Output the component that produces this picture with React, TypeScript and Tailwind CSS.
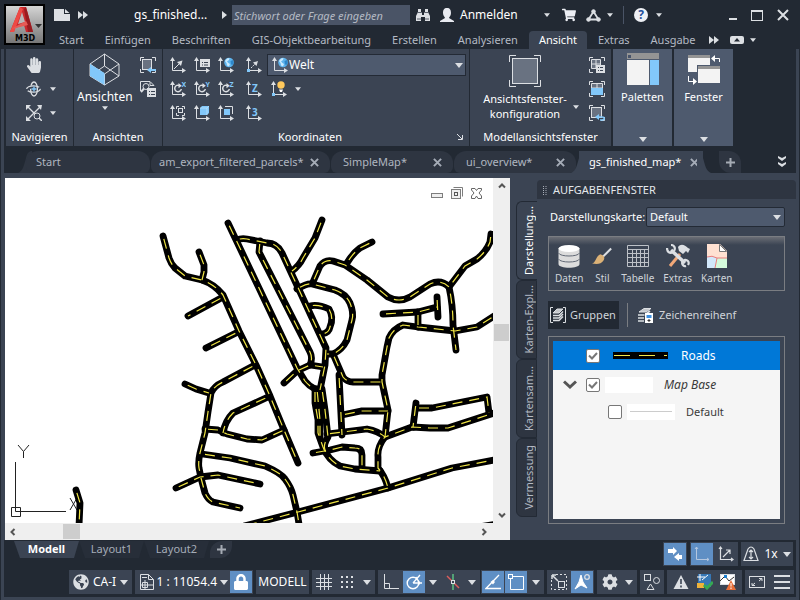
import { useState } from 'react';
import type { ReactNode } from 'react';
import clsx from 'clsx';
import { FaHandPaper, FaShoppingCart, FaCog, FaLock, FaGlobeAmericas } from 'react-icons/fa';

// ═══════════════════════════════════════════════════════════════════════════
// SMALL ICON HELPERS
// ═══════════════════════════════════════════════════════════════════════════

const LIGHT = '#dcdfe3';
const BLUE = '#82c8fa';

type IconProps = { children: ReactNode; className?: string; box?: string };

function Icon({ children, className = 'h-4 w-4', box = '0 0 16 16' }: IconProps) {
  return (
    <svg viewBox={box} className={clsx('block shrink-0', className)} fill="none" stroke={LIGHT} aria-hidden="true">
      {children}
    </svg>
  );
}

function Caret({ small = false }: { small?: boolean }) {
  return (
    <Icon box="0 0 8 5" className={small ? 'h-1 w-1.5' : 'h-[5px] w-2'}>
      <path d="M0 0H8L4 5Z" fill={LIGHT} stroke="none" />
    </Icon>
  );
}

function DoubleArrow() {
  return (
    <Icon box="0 0 10 8" className="h-2 w-2.5">
      <path d="M0 0L5 4L0 8ZM5 0L10 4L5 8Z" fill={LIGHT} stroke="none" />
    </Icon>
  );
}

function Cross() {
  return (
    <Icon box="0 0 10 10" className="h-[9px] w-[9px]">
      <path d="M1 1L9 9M9 1L1 9" strokeWidth="2.2" stroke="#a5acb7" />
    </Icon>
  );
}

function Plus() {
  return (
    <Icon box="0 0 9 9" className="h-[9px] w-[9px]">
      <path d="M4.5 0V9M0 4.5H9" strokeWidth="2" stroke="#a5abb4" />
    </Icon>
  );
}

// Coordinate axes with an extra symbol in the upper right corner
function Axes({ children }: { children?: ReactNode }) {
  return (
    <Icon>
      <path d="M2.5 2V13.5H14" />
      <path d="M2.5 0L5 4H0ZM16 13.5L12 16V11Z" fill={LIGHT} stroke="none" />
      {children}
    </Icon>
  );
}

function Globe() {
  return (
    <g stroke="none">
      <circle cx="11" cy="5.5" r="4.8" fill="#5db4ee" />
      <path d="M7 4L9 1.5L11.5 1L11 3L9 4.500L10.5 6L12 7L11 9.500L9 8.500L8.500 6Z" fill="#c9eaff" />
      <path d="M12.5 4L15 3L15.800 6L14 8.500L12.800 6.500Z" fill="#2d86c9" />
    </g>
  );
}

function Rotate({ axis }: { axis: string }) {
  return (
    <Axes>
      <path d="M9.5 4.5A3.3 3.3 0 1 0 11.300 8" strokeWidth="1.5" />
      <path d="M8.5 2L11.800 4.800L8.500 7.200Z" fill={LIGHT} stroke="none" />
      <text x="11.5" y="5.5" fontSize="7" fontWeight="bold" fill={BLUE} stroke="none">
        {axis}
      </text>
    </Axes>
  );
}

function AxisLetter({ letter }: { letter: string }) {
  return (
    <Axes>
      <text x="6" y="10.5" fontSize="10" fontWeight="bold" fill={BLUE} stroke="none">
        {letter}
      </text>
    </Axes>
  );
}

const CORNERS = 'M0.5 4V0.5H4M12 0.5H15.5V4M15.5 12V15.5H12M4 15.5H0.5V12';

// ═══════════════════════════════════════════════════════════════════════════
// HEADER
// ═══════════════════════════════════════════════════════════════════════════

const RIBBON_TABS = [
  'Start',
  'Einfügen',
  'Beschriften',
  'GIS-Objektbearbeitung',
  'Erstellen',
  'Analysieren',
  'Ansicht',
  'Extras',
  'Ausgabe',
];

function AppButton() {
  return (
    <button
      aria-label="Anwendungsmenü"
      className="mt-1 h-[41px] w-[41px] shrink-0 border-2 border-black bg-gradient-to-b from-[#d5d5d5] via-[#a5a5a5] to-[#777]"
    >
      <Icon box="0 0 37 37" className="h-[37px] w-[37px]">
        <path d="M4 26L14 1H20L27 26H20L18 19L9 22L8 26Z" fill="#c9282d" stroke="none" />
        <path d="M14 1L17 3L8 26H4Z" fill="#ee4a45" stroke="none" />
        <path d="M16 6L19 16L12 18Z" fill="#b9b9b9" stroke="none" />
        <path d="M18 3L20 1L27 26H22Z" fill="#981b20" stroke="none" />
        <path d="M5 23L20 15L22 19L10 22Z" fill="#e65b56" stroke="none" />
        <path d="M29 18H36L32.5 22Z" fill="#333" stroke="none" />
        <text x="9" y="35" fontSize="8" fontWeight="bold" fill="#000" stroke="none" fontFamily="DejaVu Sans, sans-serif">
          M3D
        </text>
      </Icon>
    </button>
  );
}

function TitleBar() {
  return (
    <div className="flex h-7 items-center pt-0.5 text-[12px]">
      <button aria-label="Neu" className="ml-[9px]">
        <Icon box="0 0 16 12" className="h-3 w-4">
          <path d="M0 0H10V5H16V12H0Z" fill={LIGHT} stroke="none" />
          <path d="M11 0L15.5 4H11Z" fill={LIGHT} stroke="none" />
        </Icon>
      </button>
      <button aria-label="Mehr" className="ml-2">
        <DoubleArrow />
      </button>
      <span className="ml-[46px] w-20 whitespace-nowrap text-white">gs_finished...</span>
      <Icon box="0 0 5 8" className="ml-2 h-2 w-[5px]">
        <path d="M0 0L5 4L0 8Z" fill={LIGHT} stroke="none" />
      </Icon>
      <input
        type="text"
        aria-label="Suche"
        placeholder="Stichwort oder Frage eingeben"
        className="ml-[5px] h-5 w-[178px] bg-[#4a5466] px-0.5 text-[11px] italic text-white outline-none placeholder:text-[#b4bac4]"
      />
      <button aria-label="Suchen" className="ml-1.5">
        <Icon box="0 0 14 14" className="h-3.5 w-3.5">
          <path d="M2 1H5V4L6 5V7H8V5L9 4V1H12V4L14 8V13H9V9H5V13H0V8L2 4Z" fill={LIGHT} stroke="none" />
          <path d="M1.500 4.500H5.500M8.500 4.500H12.500M1 11H5M9 11H13" stroke="#5a606b" />
        </Icon>
      </button>
      <button className="ml-2.5 flex items-center gap-1.5 text-white">
        <Icon box="0 0 14 15" className="h-[15px] w-3.5">
          <path d="M7 0C10 0 11 2 11 5C11 8 9 9 9 10L14 13V14H0V13L5 10C5 9 3 8 3 5C3 2 4 0 7 0Z" fill="#e8eaf0" stroke="none" />
        </Icon>
        <span className="w-[78px] text-left">Anmelden</span>
        <Caret small />
      </button>
      <button aria-label="App Store" className="ml-3">
        <FaShoppingCart className="h-3.5 w-3.5 text-[#eceef4]" />
      </button>
      <button aria-label="Autodesk" className="ml-2.5 flex items-center gap-1.5">
        <Icon box="0 0 15 13" className="h-[13px] w-[15px]">
          <path d="M7.5 2.5L2.500 10.500H12.500Z" strokeWidth="1.8" />
          <circle cx="7.5" cy="2.5" r="1.8" fill={LIGHT} />
          <circle cx="2.5" cy="10.5" r="1.8" fill={LIGHT} />
          <circle cx="12.5" cy="10.5" r="1.8" fill={LIGHT} />
        </Icon>
        <Caret small />
      </button>
      <span className="ml-2.5 h-[18px] w-px bg-[#4a5466]" />
      <button aria-label="Hilfe" className="ml-2.5 flex items-center gap-2">
        <span className="flex h-3.5 w-3.5 items-center justify-center rounded-full bg-[#eef0f5] leading-[14px] font-bold text-[#234f9c]">
          ?
        </span>
        <Caret small />
      </button>
      <div className="mr-2.5 ml-auto flex items-center gap-[14px]">
        <button aria-label="Minimieren" className="pt-2">
          <span className="block h-0.5 w-2 bg-[#dcdfe3]" />
        </button>
        <button aria-label="Maximieren" className="h-[11px] w-3 border border-t-2 border-[#dcdfe3]" />
        <button aria-label="Schließen">
          <Icon box="0 0 12 12" className="h-3 w-3">
            <path d="M1 1L11 11M11 1L1 11" strokeWidth="2" />
          </Icon>
        </button>
      </div>
    </div>
  );
}

function RibbonTabs() {
  const [active, setActive] = useState('Ansicht');
  return (
    <nav className="flex h-[21px] items-end gap-px pl-1 text-[#b4bac4]">
      {RIBBON_TABS.map((tab) => (
        <button
          key={tab}
          onClick={() => setActive(tab)}
          className={clsx(
            'h-[18px] rounded-t-sm px-2.5 whitespace-nowrap',
            tab === active && 'bg-[#3b4453] text-white'
          )}
        >
          {tab}
        </button>
      ))}
      <button aria-label="Weitere Register" className="flex h-[18px] items-center px-0.5">
        <DoubleArrow />
      </button>
      <button aria-label="Multifunktionsleiste" className="ml-2 flex h-[18px] items-center gap-1.5">
        <Icon box="0 0 14 8" className="h-2 w-3.5">
          <rect width="14" height="8" rx="2" fill={LIGHT} stroke="none" />
          <path d="M4 5.5L7 2L10 5.500Z" fill="#222933" stroke="none" />
        </Icon>
        <Caret small />
      </button>
    </nav>
  );
}

// ═══════════════════════════════════════════════════════════════════════════
// RIBBON
// ═══════════════════════════════════════════════════════════════════════════

type PanelProps = { label: string; className?: string; children: ReactNode; launcher?: boolean };

function Panel({ label, className, children, launcher = false }: PanelProps) {
  return (
    <section className={clsx('flex flex-col bg-[#3b4453]', className)}>
      <div className="flex-1">{children}</div>
      <div className="flex h-[19px] items-center justify-center whitespace-nowrap">
        <span className={launcher ? 'flex-1 text-center' : ''}>{label}</span>
        {launcher && (
          <Icon box="0 0 6 6" className="mr-1.5 h-1.5 w-1.5">
            <path d="M0 0L5 5M5.5 1V5.500H1" />
          </Icon>
        )}
      </div>
    </section>
  );
}

function ToolButton({ label, children, menu = false }: { label: string; children: ReactNode; menu?: boolean }) {
  return (
    <button aria-label={label} className="flex items-center gap-2">
      {children}
      {menu && <Caret small />}
    </button>
  );
}

function Ribbon() {
  return (
    <div className="flex h-[97px] gap-px pl-0.5 text-white">
      <Panel label="Navigieren" className="w-[67px]">
        <div className="flex flex-col gap-2 pt-2 pl-5">
          <ToolButton label="Pan">
            <FaHandPaper className="h-4 w-4 text-[#dcdfe3]" />
          </ToolButton>
          <ToolButton label="Orbit" menu>
            <Icon>
              <ellipse cx="7.5" cy="8" rx="6.8" ry="3.2" strokeDasharray="14 2" strokeWidth="1.3" />
              <ellipse cx="8" cy="8" rx="3.4" ry="7" strokeDasharray="17 3" strokeWidth="1.3" />
              <path d="M8 5.5V10.500M5.500 8H10.500" stroke={BLUE} strokeWidth="1.3" />
            </Icon>
          </ToolButton>
          <ToolButton label="Zoom Grenzen" menu>
            <Icon>
              <path d="M2 2L9 9M14 2L2 14" strokeWidth="1.4" />
              <path d="M0 0H5L0 5ZM16 0H11L15 5ZM0 16V11L5 16Z" fill={LIGHT} stroke="none" />
              <circle cx="11" cy="11" r="3" fill="#3b4453" />
              <path d="M13 13L16 16" strokeWidth="1.5" />
            </Icon>
          </ToolButton>
        </div>
      </Panel>

      <Panel label="Ansichten" className="w-[88px]">
        <div className="flex justify-between pt-1 pr-1.5 pl-[3px]">
          <button className="flex flex-col items-center">
            <Icon box="0 0 31 33" className="h-[33px] w-[31px]">
              <path d="M15.5 1L30 11V23L15.500 32L1 23V11ZM1 11L15.500 21L30 11M15.500 1V13M15.500 21V32M1 23L15.500 13L30 23" />
              <path d="M1 11L15.5 20V32L1 23Z" fill={BLUE} stroke="none" />
            </Icon>
            <span className="mt-0.5 text-[12px] leading-[18px]">Ansichten</span>
            <Caret small />
          </button>
          <div className="flex flex-col gap-2 pt-1">
            <ToolButton label="Vorherige Ansicht">
              <Icon>
                <path d={CORNERS} />
                <rect x="2.5" y="2.5" width="9" height="10" fill="#697281" />
                <path d="M16 13H10" stroke={BLUE} strokeWidth="2" />
                <path d="M7 13L11 10V16Z" fill={BLUE} stroke="none" />
              </Icon>
            </ToolButton>
            <ToolButton label="Ansichtsmanager">
              <Icon>
                <path d="M0.5 10V0.500H10L14 4.500H10V1" />
                <circle cx="6" cy="5.5" r="3" />
                <path d="M4 7.5L1 11" strokeWidth="2" />
                <path d="M7 7H16V16H7Z" fill={LIGHT} stroke="none" />
                <path d="M9 10.5H10M11 10.500H15M9 13.500H10M11 13.500H15" stroke="#3b4453" />
              </Icon>
            </ToolButton>
          </div>
        </div>
      </Panel>

      <Panel label="Koordinaten" className="min-w-[306px] flex-1" launcher>
        <div className="grid grid-cols-[24px_24px_28px_21px_1fr] items-center pt-[5px] pr-[3px] pl-[7px]">
          <ToolButton label="BKS">
            <Axes>
              <path d="M4 12L10 6" />
              <path d="M12.5 3.5L11 9L7 5Z" fill={LIGHT} stroke="none" />
            </Axes>
          </ToolButton>
          <ToolButton label="Benanntes BKS">
            <Axes>
              <rect x="6" y="2" width="10" height="8" fill={LIGHT} stroke="none" />
              <path d="M8 5.5H9M10 5.500H14M8 8H9M10 8H14" stroke="#3b4453" />
            </Axes>
          </ToolButton>
          <ToolButton label="BKS Welt">
            <Axes>
              <Globe />
            </Axes>
          </ToolButton>
          <ToolButton label="Ursprung">
            <Axes>
              <path d="M5 11L9 7" strokeDasharray="2 1" />
              <path d="M12 4L10.5 9L7 5.500Z" fill={LIGHT} stroke="none" />
              <rect x="1" y="12" width="3" height="3" fill={BLUE} stroke="none" />
            </Axes>
          </ToolButton>
          <label className="relative flex h-[22px] items-center border border-[#232a35] bg-[#4e5a6e]">
            <span className="pointer-events-none absolute left-1">
              <Axes>
                <Globe />
              </Axes>
            </span>
            <select
              aria-label="Koordinatensystem"
              className="h-full w-full appearance-none bg-transparent pl-[21px] text-[12px] text-white outline-none"
            >
              <option>Welt</option>
            </select>
            <span className="pointer-events-none absolute right-0.5">
              <Caret />
            </span>
          </label>

          <ToolButton label="X drehen">
            <Rotate axis="X" />
          </ToolButton>
          <ToolButton label="Y drehen">
            <Rotate axis="Y" />
          </ToolButton>
          <ToolButton label="Z drehen">
            <Rotate axis="Z" />
          </ToolButton>
          <ToolButton label="Z-Achse">
            <AxisLetter letter="Z" />
          </ToolButton>
          <div className="flex h-[26px] items-center pl-1">
            <ToolButton label="BKS-Symbol" menu>
              <Axes>
                <circle cx="10" cy="4" r="3.7" fill="#ffc95c" stroke="none" />
                <path d="M8 8.5H12L11 11H9Z" fill="#fff" stroke="none" />
                <rect x="1" y="12" width="3" height="3" fill={BLUE} stroke="none" />
              </Axes>
            </ToolButton>
          </div>

          <ToolButton label="Ansicht">
            <Axes>
              <path d="M6.5 4V1.500H9M12 1.500H14.500V4M14.500 8V10.500H12M9 10.500H6.500V8" />
              <rect x="8.5" y="3.5" width="4" height="4" />
            </Axes>
          </ToolButton>
          <ToolButton label="Objekt">
            <Axes>
              <path d="M6 3L8 1H15V8L13 10H6Z" fill={BLUE} stroke="none" />
              <path d="M6 3H13L15 1M13 3V10" stroke="#d8f0ff" strokeWidth="0.5" />
            </Axes>
          </ToolButton>
          <ToolButton label="Fläche">
            <Axes>
              <rect x="6" y="4" width="6" height="6" fill={BLUE} stroke="none" />
              <path d="M7 1.5H14.500V9" />
            </Axes>
          </ToolButton>
          <ToolButton label="3 Punkte">
            <AxisLetter letter="3" />
          </ToolButton>
          <span className="h-[22px]" />
        </div>
      </Panel>

      <Panel label="Modellansichtsfenster" className="w-[141px]">
        <div className="flex justify-between pt-1.5 pr-1.5 pl-[3px]">
          <div className="flex">
            <button className="flex w-[104px] flex-col items-center">
              <Icon box="0 0 32 32" className="h-8 w-8">
                <path d="M0.5 7V0.500H7M25 0.500H31.500V7M31.500 25V31.500H25M7 31.500H0.500V25" />
                <rect x="3.5" y="3.5" width="25" height="25" fill="#697281" />
              </Icon>
              <span className="mt-1 leading-[15px]">
                Ansichtsfenster-
                <br />
                konfiguration
              </span>
            </button>
            <span className="-ml-1 mt-[50px]">
              <Caret small />
            </span>
          </div>
          <div className="flex flex-col gap-2 pt-0.5">
            <ToolButton label="Benannt">
              <Icon>
                <path d={CORNERS} />
                <path d="M2.5 2.500H11.500V11.500H2.500ZM7 2.500V11M2.500 7H11" fill="#697281" />
                <rect x="7" y="8" width="9" height="8" fill={LIGHT} stroke="none" />
                <path d="M9 10.5H10M11 10.500H14M9 13.500H10M11 13.500H14" stroke="#3b4453" />
              </Icon>
            </ToolButton>
            <ToolButton label="Verbinden">
              <Icon>
                <path d={CORNERS} />
                <path d="M2.5 2.500H13.500V7H2.500ZM8 3V7" fill="#697281" />
                <rect x="2" y="7" width="12" height="7" fill={BLUE} stroke="none" />
              </Icon>
            </ToolButton>
            <ToolButton label="Wiederherstellen">
              <Icon>
                <path d={CORNERS} />
                <rect x="2.5" y="2.5" width="10" height="10" fill="#697281" />
                <path d="M9 12H13C16 12 16 15 13 15H11" stroke={BLUE} strokeWidth="1.5" />
                <path d="M6 12L10 9V15Z" fill={BLUE} stroke="none" />
              </Icon>
            </ToolButton>
          </div>
        </div>
      </Panel>

      <button className="ml-px flex w-[59px] flex-col items-center bg-[#4e5a6e] pt-1">
        <Icon box="0 0 32 32" className="h-8 w-8">
          <path d="M0 0H32V6H0Z" fill="#949494" stroke="none" />
          <path d="M1 2H4V5H1Z" fill="#47536a" stroke="none" />
          <path d="M0 7H22V32H0Z" fill="#f3f3f3" stroke="none" />
          <path d="M23 7H32V32H23Z" fill={BLUE} stroke="none" />
        </Icon>
        <span className="mt-1">Paletten</span>
        <span className="mt-auto mb-1">
          <Caret />
        </span>
      </button>
      <button className="ml-px flex w-[59px] flex-col items-center bg-[#4e5a6e] pt-1">
        <Icon box="0 0 34 32" className="h-8 w-[34px]">
          <path d="M1 2H23V19H1Z" fill="#f3f3f3" stroke="none" />
          <path d="M1 2H23V5H1Z" fill="#949494" stroke="none" />
          <path d="M10 12H34V31H10Z" fill="#4e5a6e" stroke="none" />
          <path d="M11 13H33V30H11Z" fill="#f3f3f3" stroke="none" />
          <path d="M11 13H33V16H11Z" fill="#949494" stroke="none" />
          <path d="M27 5.5H32.500V9M1.500 23V28.500H6" stroke="#fff" />
          <path d="M24 5.5L28 2V9ZM10 28.500L6 25V32Z" fill="#fff" stroke="none" />
        </Icon>
        <span className="mt-1">Fenster</span>
        <span className="mt-auto mb-1">
          <Caret />
        </span>
      </button>
      <div className="w-[62px]" />
    </div>
  );
}

// ═══════════════════════════════════════════════════════════════════════════
// FILE TABS
// ═══════════════════════════════════════════════════════════════════════════

const FILES = [
  { name: 'Start', width: 'w-[127px]', pad: 'pl-2.5' },
  { name: 'am_export_filtered_parcels*', width: 'w-[180px]', pad: 'pl-2' },
  { name: 'SimpleMap*', width: 'w-[123px]', pad: 'pl-3' },
  { name: 'ui_overview*', width: 'w-[123px]', pad: 'pl-3' },
  { name: 'gs_finished_map*', width: 'w-[128px]', pad: 'pl-3' },
];

function Flare({ color, flip = false }: { color: string; flip?: boolean }) {
  return (
    <svg
      viewBox="0 0 14 22"
      preserveAspectRatio="none"
      className={clsx('-mx-1.5 h-full w-3.5 shrink-0', flip && '-scale-x-100')}
      aria-hidden="true"
    >
      <path d="M0 22C5 20 6 14 8 7C9 2 11 0 14 0V22Z" fill={color} />
    </svg>
  );
}

function FileTabs() {
  const [open, setOpen] = useState('gs_finished_map*');
  return (
    <div className="mt-[5px] flex h-[22px] items-stretch bg-[#222933] pl-5 text-[#aeb5c0]">
      {FILES.map((file, i) => {
        const active = file.name === open;
        return (
          <div key={file.name} className={clsx('flex', file.width)}>
            {(active || i === 0) && <Flare color={active ? '#3b4453' : '#2e3541'} />}
            <div
              className={clsx(
                'flex min-w-0 flex-1 items-center justify-between',
                active
                  ? 'bg-[#3b4453] pr-1 pl-2.5 text-white'
                  : 'mr-px rounded-xl rounded-b-md bg-[#2e3541] pr-[11px]',
                !active && file.pad
              )}
            >
              <button onClick={() => setOpen(file.name)} className="whitespace-nowrap">
                {file.name}
              </button>
              {i > 0 && (
                <button aria-label={`${file.name} schließen`}>
                  <Cross />
                </button>
              )}
            </div>
            {active && <Flare color="#3b4453" flip />}
          </div>
        );
      })}
      <button
        aria-label="Neue Zeichnung"
        className="ml-3.5 flex w-[22px] items-center justify-center rounded-tr-xl rounded-bl-xl bg-[#2e3541]"
      >
        <Plus />
      </button>
      <button aria-label="Weitere Dateien" className="mr-2.5 ml-auto flex items-center">
        <Icon box="0 0 8 12" className="h-3 w-2">
          <path d="M0 0L4 2L8 0V2L4 5L0 2ZM0 6L4 8L8 6V8L4 11L0 8Z" fill={LIGHT} stroke="none" />
        </Icon>
      </button>
    </div>
  );
}

// ═══════════════════════════════════════════════════════════════════════════
// DRAWING AREA
// ═══════════════════════════════════════════════════════════════════════════

const ROADS = [
  'M163 236L169 258Q171 264 175 268L185 276L202 280Q214 284 223 295L239 331L256 365L270 396L284 430L298 463',
  'M199 252L204 265V272L202 280',
  'M223 297L188 316',
  'M238 332L206 348',
  'M255 365L223 382Q214 386 211 393L208 412L205 433L200 453Q198 462 199 468L201 478L205 493Q208 500 213 502L240 508',
  'M185 384L196 389L209 393',
  'M268 397L233 413Q225 421 223 433',
  'M205 429L218 430L227 434L247 439L262 440L284 430',
  'M202 454L230 458L265 466Q281 473 285 479Q291 487 293 495L297 512L299 524',
  'M176 488L200 477L218 475L260 484',
  'M228 223L297 368L305 381Q309 386 315 389',
  'M237 240Q241 238 247 239L267 243Q277 243 282 253L326 348L325 365L320 390',
  'M260 241L259 252L310 352Q313 358 310 365',
  'M284 383L297 371L310 365L323 367',
  'M322 220L315 238L303 258Q299 266 292 271',
  'M297 289Q307 283 312 284L335 290Q346 294 350 303Q354 313 352 320L347 340Q342 350 333 354H327',
  'M313 282L320 266Q325 259 333 261L345 265L367 280L388 297Q399 303 410 297L430 284Q441 279 449 287Q453 305 453 325L456 350',
  'M372 242L360 248Q353 253 347 263',
  'M491 234L490 242Q486 252 477 259L465 266L449 287',
  'M383 314L418 312L437 307',
  'M437 297L438 317',
  'M418 312V327',
  'M494 316L477 327L455 331L418 327L403 325Q393 329 389 338L387 347L382 375V382L388 410L385 437Q377 447 378 457V468Q385 476 388 488',
  'M333 354L343 377Q347 382 353 382H382',
  'M339 375L342 435',
  'M342 415L361 411H388',
  'M327 434L367 429Q378 431 385 437L412 427L430 428H448L494 413',
  'M416 403L413 427',
  'M416 408H432L487 397L489 413',
  'M315 389V403L318 420V433L323 447Q328 460 340 466L355 469L380 471',
  'M317 389L320 420V437',
  'M322 389L325 410L328 437Q322 446 326 452',
  'M313 453L330 450L342 447L355 448Q362 448 362 455V467',
  'M310 306Q318 304 329 309Q334 317 330 327Q329 333 322 334',
  'M244 526L298 512L388 488L452 468L494 460',
  'M76 490L80 503L79 526',
];

function MapCanvas() {
  return (
    <svg
      viewBox="5 178 488 345"
      preserveAspectRatio="xMinYMin slice"
      className="block h-0 min-h-[345px] w-full flex-1 bg-white"
      fill="none"
      role="img"
      aria-label="Straßenkarte"
    >
      {/* UCS marker */}
      <g stroke="#222">
        <path d="M15.5 462V511.500H66M11.500 507.500H20.500V516.500H11.500Z" />
        <path d="M18 445L23.5 451.500L29 445M23.500 451.500V458M70 510L77 498M70 498L77 510" />
      </g>
      <g stroke="#000" strokeWidth="6.800" strokeLinecap="round" strokeLinejoin="round">
        {ROADS.map((d) => (
          <path key={d} d={d} />
        ))}
      </g>
      <g stroke="#f0e545" strokeWidth="1.200" strokeDasharray="10 7" strokeDashoffset="-3">
        {ROADS.map((d) => (
          <path key={d} d={d} />
        ))}
      </g>
      <path d="M476 524L494 521V524Z" fill="#000" />
      {/* Viewport controls */}
      <g stroke="#7d7d7d">
        <rect x="431.5" y="193.5" width="11" height="4" fill="#eee" />
        <path d="M453.5 187.500H462.500V196.500" />
        <rect x="451.5" y="189.5" width="9" height="9" fill="#eee" />
        <rect x="454.5" y="192.5" width="3" height="3" stroke="#555" />
        <path
          d="M471.5 188.500H475L476.500 190.500L478 188.500H481.500V190L479 193L481.500 196V198.500H478L476.500 196L475 198.500H471.500V196L474 193L471.500 190Z"
          stroke="#666"
        />
      </g>
    </svg>
  );
}

function Chevron({ dir }: { dir: 'up' | 'down' | 'left' | 'right' }) {
  const turn = { up: 'rotate-180', down: '', left: 'rotate-90', right: '-rotate-90' }[dir];
  return (
    <Icon box="0 0 8 8" className={clsx('h-2 w-2', turn)}>
      <path d="M1 2.5L4 5.500L7 2.500" stroke="#555" strokeWidth="2" />
    </Icon>
  );
}

function Drawing() {
  return (
    <div className="flex min-w-[505px] flex-1 flex-col">
      <div className="flex flex-1">
        <div className="flex min-w-0 flex-1 flex-col">
          <MapCanvas />
        </div>
        <div className="flex w-[17px] flex-col items-center justify-between bg-[#efefef] py-1">
          <button aria-label="Nach oben">
            <Chevron dir="up" />
          </button>
          <span className="mb-9 h-[17px] w-[15px] bg-[#cdcdcd]" />
          <button aria-label="Nach unten">
            <Chevron dir="down" />
          </button>
        </div>
      </div>
      <div className="flex h-[17px] items-center bg-[#efefef] pr-[22px] pl-1">
        <button aria-label="Nach links">
          <Chevron dir="left" />
        </button>
        <span className="ml-[46px] h-[15px] w-[17px] bg-[#cdcdcd]" />
        <button aria-label="Nach rechts" className="ml-auto">
          <Chevron dir="right" />
        </button>
      </div>
    </div>
  );
}

// ═══════════════════════════════════════════════════════════════════════════
// TASK PANE
// ═══════════════════════════════════════════════════════════════════════════

const SIDE_TABS = ['Darstellung...', 'Karten-Expl...', 'Kartensam...', 'Vermessung'];

function PaneTool({ label, children }: { label: string; children: ReactNode }) {
  return (
    <button className="flex flex-col items-center gap-0.5 text-[10px] leading-4 text-[#d0d4da]">
      {children}
      <span>{label}</span>
    </button>
  );
}

function LayerCheck({ label, defaultChecked = false }: { label: string; defaultChecked?: boolean }) {
  const [checked, setChecked] = useState(defaultChecked);
  return (
    <span className="relative block h-3.5 w-3.5 shrink-0">
      <input
        type="checkbox"
        aria-label={label}
        checked={checked}
        onChange={() => setChecked(!checked)}
        className="block h-3.5 w-3.5 appearance-none rounded-xs border border-[#777] bg-white"
      />
      {checked && (
        <Icon box="0 0 14 14" className="pointer-events-none absolute top-0 left-0 h-3.5 w-3.5">
          <path d="M3 6.5L6 9.500L11 4" stroke="#777" strokeWidth="2" />
        </Icon>
      )}
    </span>
  );
}

function TaskPane() {
  const [side, setSide] = useState(SIDE_TABS[0]);
  return (
    <aside className="flex w-[286px] shrink-0 pl-1.5">
      <div className="flex w-[21px] flex-col pt-[23px]">
        {SIDE_TABS.map((tab) => (
          <button
            key={tab}
            onClick={() => setSide(tab)}
            className={clsx(
              'flex h-[79px] items-center justify-center rounded-l-md border border-[#232a35] pl-1',
              tab === side ? 'border-r-0 text-white' : 'bg-[#2e3541] text-[#b4bac4]'
            )}
          >
            <span className="rotate-180 leading-4 whitespace-nowrap [writing-mode:vertical-rl]">{tab}</span>
          </button>
        ))}
      </div>
      <div className="flex flex-1 flex-col pt-0.5">
        <h2 className="flex h-[19px] items-center gap-1.5 rounded-t-sm bg-[#2e3541] pl-1.5 text-[#e4e7eb]">
          <Icon box="0 0 4 10" className="mt-0.5 h-2.5 w-1">
            <path d="M0.5 0V10M3 0V10" strokeDasharray="1 1" stroke="#aab0ba" />
          </Icon>
          AUFGABENFENSTER
        </h2>
        <div className="flex flex-1 flex-col pr-[11px] pl-[11px]">
          <div className="mt-2 flex items-center justify-between pl-0.5 text-white">
            <label htmlFor="display-map">Darstellungskarte:</label>
            <span className="relative flex h-5 w-[139px] items-center">
              <select
                id="display-map"
                className="h-full w-full appearance-none rounded-xs border border-[#232a35] bg-[#4e5a6e] pl-[3px] outline-none"
              >
                <option>Default</option>
              </select>
              <span className="pointer-events-none absolute right-1">
                <Caret />
              </span>
            </span>
          </div>

          <div className="mt-[9px] flex h-[55px] items-end gap-[9px] border border-[#7a7d82] bg-gradient-to-b from-[#6b6e75] via-[#3b4453] via-15% to-[#3b4453] pb-1 pl-1.5">
            <PaneTool label="Daten">
              <Icon box="0 0 24 24" className="h-6 w-6">
                <path d="M1.5 4V20C1.500 25 22.500 25 22.500 20V4Z" fill="#dcdcdc" stroke="none" />
                <ellipse cx="12" cy="4.5" rx="10.5" ry="3.5" fill="#fff" stroke="none" />
                <path d="M1.5 9C3 13 21 13 22.500 9M1.500 15C3 19 21 19 22.500 15" stroke="#626976" />
              </Icon>
            </PaneTool>
            <PaneTool label="Stil">
              <Icon box="0 0 24 24" className="h-6 w-5">
                <path d="M23 3L13 13" strokeWidth="2.5" />
                <path d="M10 10C14 11 16 14 14 17C11 22 6 22 0 21C5 20 4 13 10 10Z" fill="#dbb176" stroke="none" />
              </Icon>
            </PaneTool>
            <PaneTool label="Tabelle">
              <Icon box="0 0 24 24" className="h-6 w-6">
                <path
                  d="M1.5 1.500H22.500V22.500H1.500ZM1.500 5.500H22.500M1.500 9.500H22.500M1.500 13.500H22.500M1.500 18.500H22.500M6.500 5.500V22M10.500 5.500V22M14.500 5.500V22M18.500 5.500V22"
                  stroke="#bdc1c7"
                />
              </Icon>
            </PaneTool>
            <PaneTool label="Extras">
              <Icon box="0 0 24 24" className="h-6 w-6">
                <path d="M14 10L4 22" stroke="#f2a878" strokeWidth="3" />
                <path d="M12 3C15 -1 19 1 22 4L24 5L22 9L20 7L17 10L13 7Z" fill={LIGHT} stroke="none" />
                <path d="M5 6L19 19" strokeWidth="3.5" />
                <path d="M1 4C1 8 4 10 7 8M5 1C8 1 10 4 8 7M17 17C15 19 17 23 20 22M18 16C21 15 24 18 22 21" strokeWidth="2.2" />
              </Icon>
            </PaneTool>
            <PaneTool label="Karten">
              <Icon box="0 0 24 24" className="h-6 w-6">
                <path d="M2 0H15L22 7V24H2Z" fill="#ffe1d2" stroke="none" />
                <path d="M2 13Q7 11 12 14L10 24H2Z" fill="#d2e8fb" stroke="none" />
                <path d="M12 14H22V24H10Z" fill="#d4fbdc" stroke="none" />
                <path d="M2 13Q7 11 12 14H22M12 14L10 24" stroke="#e87d7d" />
                <path d="M14.5 0.500V7.500H21.500Z" fill="#fff" stroke="#777" />
              </Icon>
            </PaneTool>
          </div>

          <div className="mt-2.5 flex h-7 items-center text-[#d0d4da]">
            <button className="flex h-full w-[71px] items-center gap-1 bg-[#222933] pl-0.5">
              <Icon>
                <path d="M3 0.500H0.500V15.500H3M13 0.500H15.500V15.500H13" />
                <path d="M3 6L7 2H13L9 6Z" fill="#c5c8cc" />
                <path d="M3 8.500H9L13 4.500M3 11H9L13 7M3 13.500H9L13 9.500" strokeWidth="1.400" />
              </Icon>
              Gruppen
            </button>
            <span className="ml-2 h-6 w-px bg-[#7a7d82]" />
            <button className="ml-[9px] flex items-center gap-1.5">
              <Icon>
                <path d="M2 5L7 1.500H14L9 5Z" fill="#c5c8cc" />
                <path d="M1 8H7.500M1 11H7M1 14H7M9 7L13 4" strokeWidth="1.600" />
                <rect x="8" y="6" width="8" height="10" fill="#fff" stroke="none" />
                <rect x="9.500" y="8" width="5" height="3" fill="#3d8fe0" stroke="none" />
                <path d="M12 12V15M10.500 13.500H13.500" stroke="#333" />
              </Icon>
              Zeichenreihenf
            </button>
          </div>

          <div className="mt-[7px] min-h-[188px] flex-1 border border-[#7a7d82] p-1">
            <ul className="h-full bg-[#f5f5f5] text-[12px] text-[#3a3a3a]">
              <li className="flex h-[29px] items-center bg-[#0078d7] pl-[33px] text-white">
                <LayerCheck label="Roads" defaultChecked />
                <Icon box="0 0 55 7" className="ml-[13px] h-[7px] w-[55px]">
                  <rect width="55" height="7" fill="#000" stroke="none" />
                  <path d="M1 3.500H54" stroke="#f5e94c" strokeDasharray="16 9" />
                </Icon>
                <span className="ml-[13px]">Roads</span>
              </li>
              <li className="flex h-[29px] items-center pl-2.5">
                <Icon box="0 0 14 10" className="h-2.5 w-3.5">
                  <path d="M1 1.500L7 7L13 1.500" stroke="#555" strokeWidth="3" />
                </Icon>
                <span className="w-[9px]" />
                <LayerCheck label="Map Base" defaultChecked />
                <span className="ml-[5px] h-4 w-12 bg-white" />
                <span className="ml-[11px] italic">Map Base</span>
              </li>
              <li className="flex h-[25px] items-center pl-[55px]">
                <LayerCheck label="Default" />
                <span className="ml-[5px] flex h-4 w-12 items-center bg-white px-[3px]">
                  <span className="h-px w-full bg-[#ccc]" />
                </span>
                <span className="ml-[11px] text-[11px]">Default</span>
              </li>
            </ul>
          </div>
          <div className="h-4" />
        </div>
      </div>
    </aside>
  );
}

// ═══════════════════════════════════════════════════════════════════════════
// STATUS BAR
// ═══════════════════════════════════════════════════════════════════════════

function Group({ children, className }: { children: ReactNode; className?: string }) {
  return <div className={clsx('flex h-6 shrink-0 items-center bg-[#3b4453]', className)}>{children}</div>;
}

function Toggle({ label, on = false, children }: { label: string; on?: boolean; children: ReactNode }) {
  const [pressed, setPressed] = useState(on);
  return (
    <button
      aria-label={label}
      aria-pressed={pressed}
      onClick={() => setPressed(!pressed)}
      className={clsx('flex h-[22px] w-[22px] shrink-0 items-center justify-center', pressed && 'bg-[#5f8fc4]')}
    >
      {children}
    </button>
  );
}

function MenuButton({ label }: { label: string }) {
  return (
    <button aria-label={label} className="flex h-full w-4 items-center justify-center">
      <Caret />
    </button>
  );
}

function LayoutTabs() {
  const [active, setActive] = useState('Modell');
  return (
    <div className="flex h-[17px] items-stretch pl-2.5 text-[11px]">
      {['Modell', 'Layout1', 'Layout2'].map((tab) => (
        <button
          key={tab}
          onClick={() => setActive(tab)}
          className={clsx(
            'w-[65px] pb-px leading-4 [clip-path:polygon(0_0,100%_0,calc(100%_-_5px)_100%,6px_100%)]',
            tab === active ? 'bg-[#3b4453] font-bold text-white' : 'bg-[#272e39] text-[#a5acb7]'
          )}
        >
          {tab}
        </button>
      ))}
      <button
        aria-label="Neues Layout"
        className="ml-px flex w-[22px] items-center justify-center rounded-tl-xl rounded-br-xl bg-[#2e3541]"
      >
        <Plus />
      </button>
    </div>
  );
}

function StatusBar() {
  return (
    <footer className="bg-[#222933] pt-px pb-[3px] text-[12px] text-white">
      <div className="flex h-[29px] items-start justify-between pr-[3px]">
        <LayoutTabs />
        <div className="flex gap-[3px] pt-px">
          <Group className="px-px">
            <Toggle label="Hardwarebeschleunigung" on>
              <Icon>
                <path d="M1 3H6V1L10 5L6 9V7H1ZM15 9H12V7L7 11L12 15V13H15Z" fill="#fff" stroke="none" />
              </Icon>
            </Toggle>
          </Group>
          <Group className="gap-0.5 px-px">
            <Toggle label="2D-Achsen" on>
              <Icon>
                <path d="M2.500 1V13.500H15M1 3L2.500 1L4 3M13 12L15 13.500L13 15" stroke="#b3c6df" />
              </Icon>
            </Toggle>
            <Toggle label="3D-Achsen">
              <Icon>
                <path d="M2.500 1V13.500H15M1 3L2.500 1L4 3M13 12L15 13.500L13 15M5 11L12 4M8 4H12V8" strokeWidth="1.200" />
              </Icon>
            </Toggle>
          </Group>
          <Group className="w-[52px] justify-around">
            <Icon>
              <path d="M1 14.500H15L11 3Q8 -1 5 3ZM8 4V13M6 6L8 4L10 6M6 11L8 13L10 11" strokeWidth="1.200" />
            </Icon>
            <span>1x</span>
            <Caret />
          </Group>
        </div>
      </div>
      <div className="flex items-center justify-end gap-[3px] pr-0.5">
        <Group className="w-[63px] justify-between px-1">
          <FaGlobeAmericas className="h-4 w-4 text-[#dcdfe3]" />
          <span>CA-I</span>
          <Caret />
        </Group>
        <Group className="w-[118px] justify-between pr-px pl-[5px]">
          <Icon box="0 0 14 16" className="h-4 w-3.5">
            <path d="M0.500 15.500V0.500H8.500L13.500 5.500V15.500ZM8.500 0.500V5.500H13.500M2.500 8.500H7.500V13.500H2.500ZM0 11H14M5 6V16M2 3.500H7" />
          </Icon>
          <span className="whitespace-nowrap">1 : 11054.4</span>
          <Caret />
          <Toggle label="Maßstab sperren" on>
            <FaLock className="h-4 w-3.5 text-white" />
          </Toggle>
        </Group>
        <Group className="w-[53px] justify-center">
          <button>MODELL</button>
        </Group>
        <Group className="w-[63px] justify-between pl-px">
          <Toggle label="Raster">
            <Icon>
              <path d="M4.500 0V16M8.500 0V16M12.500 0V16M0 4.500H16M0 8.500H16M0 12.500H16" />
            </Icon>
          </Toggle>
          <Toggle label="Fang">
            <Icon box="0 0 14 12" className="h-3 w-3.5">
              <path d="M1 1H13M1 6H13M1 11H13" strokeWidth="2" strokeDasharray="2 3" />
            </Icon>
          </Toggle>
          <MenuButton label="Fangoptionen" />
        </Group>
        <Group className="w-[102px] justify-between pl-0.5">
          <Toggle label="Ortho">
            <Icon>
              <path d="M1.500 0V14.500H16M1.500 9.500H6.500V14.500" />
            </Icon>
          </Toggle>
          <Toggle label="Polar" on>
            <Icon>
              <circle cx="7" cy="9" r="5.800" strokeWidth="1.400" stroke="#fff" />
              <path d="M7 9H16M7 9L14 1M12 7L14 9L12 11M10 3L11 6" strokeWidth="1.300" stroke="#fff" />
            </Icon>
          </Toggle>
          <MenuButton label="Polaroptionen" />
          <Toggle label="Isometrie">
            <Icon>
              <path d="M2 2L14 14" stroke="#dc5d5d" strokeWidth="1.400" />
              <path d="M8 0V16" stroke="#5fc986" strokeWidth="1.400" />
              <rect x="6.500" y="6.500" width="3" height="3" fill="#3b4453" />
            </Icon>
          </Toggle>
          <MenuButton label="Isometrieoptionen" />
        </Group>
        <Group className="-ml-0.5 w-[63px] justify-between pl-px">
          <Toggle label="Objektfangspur" on>
            <Icon>
              <path d="M14 1L1 14.500H16" stroke="#fff" strokeWidth="1.300" />
              <path d="M5.500 8L8 6L10 8L8 10.500Z" fill="#fff" stroke="none" />
            </Icon>
          </Toggle>
          <Toggle label="Objektfang" on>
            <Icon>
              <path d="M5 2.500H15.500V15.500H2.500V5" stroke="#fff" />
              <rect x="0.500" y="0.500" width="4" height="4" stroke="#fff" />
            </Icon>
          </Toggle>
          <MenuButton label="Fangmodi" />
        </Group>
        <Group className="w-[47px] justify-between px-px">
          <Toggle label="Beschriftung skalieren">
            <Icon>
              <path d="M5 0.500H15.500V15.500H0.500V6" strokeDasharray="2 2" />
              <rect x="7.500" y="7.500" width="6" height="6" />
              <path d="M2 2L7 7M1 1H5M1 1V5" strokeWidth="1.500" />
            </Icon>
          </Toggle>
          <Toggle label="Beschriftung sichtbar" on>
            <Icon>
              <path d="M7 1L9 8L13 14L7 11L1 15L5 8Z" fill="#fff" stroke="#fff" />
              <circle cx="13" cy="3" r="2.300" strokeWidth="1.300" />
            </Icon>
          </Toggle>
        </Group>
        <Group className="w-10 justify-between pl-0.5">
          <Toggle label="Arbeitsbereich">
            <FaCog className="h-4 w-4 text-[#dcdfe3]" />
          </Toggle>
          <MenuButton label="Arbeitsbereiche" />
        </Group>
        <Group className="px-px">
          <Toggle label="Objekte isolieren">
            <Icon>
              <rect x="0.500" y="0.500" width="6" height="6" />
              <circle cx="12.500" cy="6.500" r="3" />
              <path d="M6.500 10L10 15.500H3Z" />
            </Icon>
          </Toggle>
        </Group>
        <Group className="w-[75px] justify-between px-1.5">
          <Icon>
            <path d="M8 1L15.500 15H0.500Z" fill={LIGHT} stroke="none" />
            <path d="M8 5V10M8 11.500V13.500" stroke="#3b4453" strokeWidth="1.600" />
          </Icon>
          <Icon>
            <rect x="1" y="0" width="13" height="13" fill="#3677b5" stroke="none" />
            <path d="M0 3H8M3 0V7M5 6L11 1" stroke="#fff" />
            <rect x="0" y="9" width="7" height="5" fill="#eeb33a" stroke="none" />
            <path d="M7 11L10 14L16 8" stroke="#35a853" strokeWidth="3" />
          </Icon>
          <Icon>
            <rect x="0.500" y="0.500" width="14" height="10" fill="#fff" />
            <path d="M0 7L5 2L9 7L14 3" stroke="#333" />
            <rect x="4" y="1" width="3" height="3" fill="#1b7fd0" stroke="none" />
            <path d="M11 6L16 16H6Z" fill="#e76e38" stroke="none" />
            <path d="M11 9V12.500M11 13.500V15" stroke="#fff" />
          </Icon>
        </Group>
        <Group className="w-[49px] justify-between px-1">
          <Icon>
            <rect x="0.500" y="2.500" width="15" height="11" />
            <path d="M6 9L3 11.500M3 9V11.500H6M10 7L13 4.500M10 4.500H13V7" />
          </Icon>
          <button aria-label="Anpassung">
            <Icon>
              <path d="M0 2H16M0 8H16M0 14H16" strokeWidth="2" />
            </Icon>
          </button>
        </Group>
      </div>
    </footer>
  );
}

// ═══════════════════════════════════════════════════════════════════════════
// APP
// ═══════════════════════════════════════════════════════════════════════════

export default function App() {
  return (
    <div className="flex min-h-screen flex-col bg-[#222933] px-px font-['Noto_Sans','Open_Sans',sans-serif] text-[11px] leading-4">
      <header className="flex pl-[3px]">
        <AppButton />
        <div className="min-w-0 flex-1">
          <TitleBar />
          <RibbonTabs />
        </div>
      </header>
      <div className="flex flex-1 flex-col border-x-[3px] border-b-[3px] border-[#3b4453]">
        <Ribbon />
        <FileTabs />
        <main className="flex flex-1 bg-[#3b4453] pt-[5px] pl-px">
          <Drawing />
          <TaskPane />
        </main>
        <StatusBar />
      </div>
    </div>
  );
}
